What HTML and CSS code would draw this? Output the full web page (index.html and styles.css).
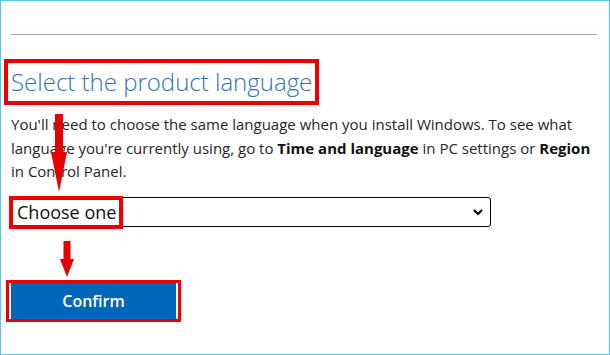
FILE: index.html
```html
<!DOCTYPE html>
<html lang="en">
  <head>
    <meta charset="UTF-8" />
    <meta name="viewport" content="width=device-width, initial-scale=1.0" />
    <title>Select the product language</title>
    <link rel="stylesheet" href="styles.css">
  </head>
  <body>
    <div class="frame">
      <hr class="divider" />

      <h1 class="title">Select the product language</h1>

      <p class="note">You'll need to choose the same language when you install Windows. To see what language you're currently using, go to <strong>Time and language</strong> in PC settings or <strong>Region</strong> in Control Panel.</p>

      <div class="field">
        <select class="lang-select">
          <option>Choose one</option>
        </select>
        <svg class="chevron" width="12" height="8" viewBox="0 0 12 8">
          <path d="M2 2 L6 6 L10 2" fill="none" stroke="#000" stroke-width="2.2" />
        </svg>
        <div class="field-mark"></div>
      </div>

      <div class="btn-mark">
        <button class="confirm">Confirm</button>
      </div>

      <!-- red annotation arrows -->
      <svg class="arrow arrow-one" width="16" height="78" viewBox="0 0 16 78">
        <polygon points="4,0 12,0 12,38 16,38 8,78 0,38 4,38" fill="#e60000" />
      </svg>
      <svg class="arrow arrow-two" width="14" height="36" viewBox="0 0 14 36">
        <polygon points="3.5,0 10.5,0 10.5,18 14,18 7,36 0,18 3.5,18" fill="#e60000" />
      </svg>
    </div>
  </body>
</html>
```

FILE: styles.css
```css
html, body {
  margin: 0;
  background: #fff;
}
.frame {
  position: relative;
  box-sizing: border-box;
  width: 610px;
  height: 355px;
  padding: 0 12px 0 10px;
  border: 1px solid #5bc2ec;
  font-family: "Open Sans", "Noto Sans", sans-serif;
  color: #262626;
}
.divider {
  margin: 33px 0 0;
  border: none;
  border-top: 1px solid #a3a3a3;
  height: 0;
}
.title {
  display: inline-block;
  margin: 24px 0 0 -7px;
  padding: 0 3px;
  border: 4px solid #ec0000;
  font-size: 24px;
  font-weight: 300;
  line-height: 38px;
  color: #2e73b6;
}
.note {
  margin: 8px 0 0;
  font-size: 15px;
  line-height: 23.5px;
}
.note strong {
  font-weight: 700;
  color: #111;
}
.field {
  position: relative;
  width: 481px;
  margin: 13px 0 0 -1px;
}
.lang-select {
  display: block;
  box-sizing: border-box;
  width: 100%;
  height: 30px;
  padding: 0 0 0 6px;
  border: 1px solid #000;
  border-radius: 3px;
  background: #fff;
  font-family: "Open Sans", "Noto Sans", sans-serif;
  font-size: 18px;
  color: #111;
  appearance: none;
  -webkit-appearance: none;
}
.chevron {
  position: absolute;
  right: 7px;
  top: 11px;
  pointer-events: none;
}
.field-mark {
  position: absolute;
  left: -1px;
  top: -1px;
  width: 114px;
  height: 33px;
  box-sizing: border-box;
  border: 4px solid #ec0000;
}
.btn-mark {
  display: inline-block;
  margin: 53px 0 0 -5px;
  padding: 0 2px;
  border: 3px solid #ec0000;
  line-height: 0;
}
.confirm {
  width: 165px;
  height: 36px;
  border: none;
  background: #0067b8;
  color: #fff;
  font-family: "Open Sans", "Noto Sans", sans-serif;
  font-size: 16px;
  font-weight: 600;
  cursor: pointer;
}
.arrow {
  position: absolute;
}
.arrow-one {
  left: 50px;
  top: 113px;
}
.arrow-two {
  left: 59px;
  top: 240px;
}
```
